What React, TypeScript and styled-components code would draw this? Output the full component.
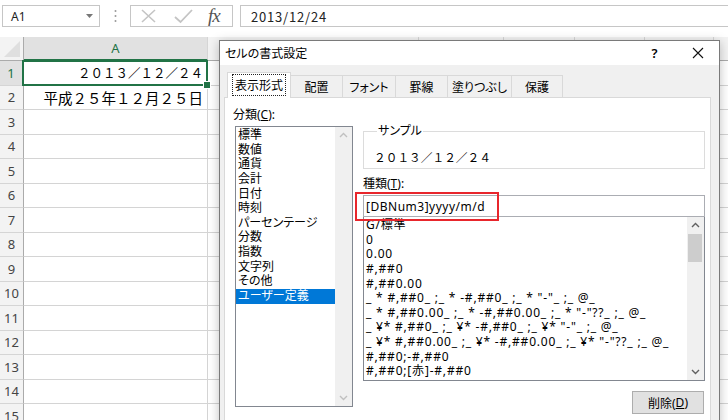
import { Fragment } from "react";
import styled, { createGlobalStyle } from "styled-components";

const JP = `"Noto Sans CJK JP", "Noto Sans", sans-serif`;
const UI = `"Noto Sans", "Noto Sans CJK JP", sans-serif`;

const GlobalStyle = createGlobalStyle`
  html, body { margin: 0; padding: 0; background: #fff; }
  body { font-family: ${JP}; }
  * { box-sizing: border-box; }
`;

const Page = styled.div`
  position: relative;
  width: 728px;
  height: 420px;
  overflow: hidden;
  background: #fff;
  font-family: ${JP};
  color: #000;
`;

/* ---------- formula bar ---------- */

const FormulaBar = styled.div`
  display: flex;
  align-items: center;
  height: 37px;
  padding: 5px 0 10px 2px;
`;

const NameBox = styled.div`
  display: flex;
  align-items: center;
  justify-content: space-between;
  width: 98px;
  height: 22px;
  padding: 0 6px 0 8px;
  border: 1px solid #c6c6c6;
  font: 12px "Noto Sans", sans-serif;
  color: #222;
`;

const Dots = styled.div`
  display: flex;
  justify-content: center;
  width: 30px;
`;

const FxBox = styled.div`
  display: flex;
  align-items: center;
  width: 103px;
  height: 22px;
  padding-left: 9px;
  gap: 17px;
  border: 1px solid #c6c6c6;
`;

const FxText = styled.span`
  font: italic 19px "Liberation Serif", serif;
  color: #555;
  letter-spacing: -1px;
  margin-left: -2px;
`;

const FormulaInput = styled.div`
  flex: 1;
  height: 22px;
  margin-left: 7px;
  padding-left: 10px;
  border: 1px solid #c6c6c6;
  border-right: none;
  display: flex;
  align-items: center;
  font: 13px ${JP};
  letter-spacing: 0.8px;
  color: #222;
`;

/* ---------- sheet ---------- */

const Sheet = styled.div`
  display: grid;
  grid-template-columns: 24px 184px 211px 85px 71px 70px 69px 40px;
  grid-template-rows: 24px;
  grid-auto-rows: 24.5px;
`;

const Corner = styled.div`
  position: relative;
  background: #f3f3f3;
  border-right: 1px solid #ababab;
  border-bottom: 1px solid #ababab;
  &::after {
    content: "";
    position: absolute;
    right: 3px;
    bottom: 3px;
    border-left: 16px solid transparent;
    border-bottom: 16px solid #dfdfdf;
  }
`;

const ColHead = styled.div<{ $active?: boolean }>`
  display: flex;
  align-items: center;
  justify-content: center;
  background: ${(p) => (p.$active ? "#e1e1e1" : "#f3f3f3")};
  border-right: 1px solid #d5d5d5;
  border-bottom: ${(p) => (p.$active ? "2px solid #217346" : "1px solid #ababab")};
  color: ${(p) => (p.$active ? "#217346" : "#444")};
  font: 13px "Noto Sans", sans-serif;
`;

const RowHead = styled.div<{ $active?: boolean }>`
  display: flex;
  align-items: center;
  justify-content: center;
  background: ${(p) => (p.$active ? "#e1e1e1" : "#f3f3f3")};
  border-right: ${(p) => (p.$active ? "2px solid #217346" : "1px solid #ababab")};
  border-bottom: 1px solid #d5d5d5;
  color: ${(p) => (p.$active ? "#217346" : "#444")};
  font: 13px "Noto Sans", sans-serif;
`;

const Cell = styled.div<{ $selected?: boolean; $size?: number }>`
  position: relative;
  display: flex;
  align-items: center;
  justify-content: flex-end;
  padding-right: 4px;
  border-right: 1px solid #d4d4d4;
  border-bottom: 1px solid #d4d4d4;
  font: ${(p) => p.$size ?? 13}px ${JP};
  white-space: nowrap;
  ${(p) =>
    p.$selected &&
    `
    &::after {
      content: "";
      position: absolute;
      inset: -1px -1px -1px -2px;
      border: 2px solid #217346;
    }
    &::before {
      content: "";
      position: absolute;
      right: -4px;
      bottom: -4px;
      width: 6px;
      height: 6px;
      background: #217346;
      border: 1px solid #fff;
      z-index: 1;
    }
  `}
`;

/* ---------- dialog ---------- */

const Dialog = styled.div`
  position: absolute;
  left: 219px;
  top: 40px;
  width: 501px;
  height: 400px;
  display: flex;
  flex-direction: column;
  background: #f0f0f0;
  border: 1px solid #7a7a7a;
  box-shadow: 0 2px 10px rgba(0, 0, 0, 0.25);
  font: 12px ${UI};
  font-feature-settings: "palt";
`;

const TitleBar = styled.div`
  display: flex;
  align-items: center;
  height: 24px;
  background: #fff;
  padding-left: 5px;
`;

const Title = styled.div`
  flex: 1;
`;

const TitleButton = styled.div`
  width: 43px;
  height: 24px;
  display: flex;
  align-items: center;
  justify-content: center;
  font: 600 13px "Noto Sans", sans-serif;
`;

const Body = styled.div`
  flex: 1;
  display: flex;
  flex-direction: column;
  padding: 5px 8px 0 4px;
`;

const TabRow = styled.div`
  display: flex;
  align-items: flex-end;
  height: 27px;
  padding-left: 3px;
`;

const Tab = styled.div<{ $w: number; $active?: boolean }>`
  width: ${(p) => p.$w}px;
  height: ${(p) => (p.$active ? 26 : 22)}px;
  margin-bottom: ${(p) => (p.$active ? -1 : 0)}px;
  display: flex;
  align-items: center;
  justify-content: center;
  background: ${(p) => (p.$active ? "#fff" : "#f0f0f0")};
  border: 1px solid #d9d9d9;
  border-bottom: none;
  border-left-width: ${(p) => (p.$active ? 1 : 0)}px;
  position: relative;
  z-index: ${(p) => (p.$active ? 1 : 0)};
  padding-bottom: ${(p) => (p.$active ? 2 : 0)}px;
  white-space: nowrap;
`;

const Focus = styled.span`
  outline: 1px dotted #222;
  outline-offset: 1px;
  padding: 0 1px;
`;

const Panel = styled.div`
  flex: 1;
  display: flex;
  gap: 10px;
  padding: 10px 5px 0 8px;
  background: #fff;
  border: 1px solid #d9d9d9;
`;

const LeftCol = styled.div`
  width: 120px;
  display: flex;
  flex-direction: column;
`;

const RightCol = styled.div`
  width: 342px;
  display: flex;
  flex-direction: column;
`;

const Label = styled.div<{ $mt?: number }>`
  line-height: 14px;
  margin-top: ${(p) => p.$mt ?? 0}px;
`;

const ListBox = styled.div<{ $h: number; $w?: number; $ml?: number; $mt?: number }>`
  display: flex;
  height: ${(p) => p.$h}px;
  width: ${(p) => (p.$w ? `${p.$w}px` : "auto")};
  margin-left: ${(p) => p.$ml ?? 0}px;
  margin-top: ${(p) => p.$mt ?? 0}px;
  border: 1px solid #828790;
  background: #fff;
  overflow: hidden;
`;

const Items = styled.div<{ $spacing?: number }>`
  flex: 1;
  padding-top: 1px;
  min-width: 0;
  letter-spacing: ${(p) => p.$spacing ?? 0}px;
`;

const Item = styled.div<{ $selected?: boolean }>`
  height: 14.65px;
  line-height: 14.65px;
  padding-left: 2px;
  white-space: nowrap;
  background: ${(p) => (p.$selected ? "#0078d7" : "transparent")};
  color: ${(p) => (p.$selected ? "#fff" : "#000")};
`;

const ScrollBar = styled.div<{ $disabled?: boolean }>`
  width: 17px;
  display: flex;
  flex-direction: column;
  align-items: center;
  justify-content: space-between;
  background: #f0f0f0;
  padding: 5px 0 5px;
  position: relative;
  color: ${(p) => (p.$disabled ? "#c0c0c0" : "#606060")};
`;

const Thumb = styled.div`
  position: absolute;
  left: 1px;
  right: 2px;
  top: 17px;
  height: 28px;
  background: #cdcdcd;
`;

const Group = styled.fieldset`
  margin: 16px 0 0;
  padding: 10px 8px 3px 10px;
  border: 1px solid #dcdcdc;
  legend {
    padding: 0 1px;
    margin-left: 3px;
    line-height: 14px;
  }
`;

const Sample = styled.div`
  line-height: 14px;
  font: 11.7px ${JP};
  font-feature-settings: normal;
`;

const InputWrap = styled.div`
  position: relative;
  margin-top: 4px;
`;

const TextInput = styled.div`
  height: 22px;
  border: 1px solid #abadb3;
  padding-left: 2px;
  display: flex;
  align-items: center;
  letter-spacing: 0.5px;
`;

const RedMark = styled.div`
  position: absolute;
  left: -8px;
  top: -3px;
  width: 144px;
  height: 29px;
  border: 2px solid #e8262c;
`;

const ButtonRow = styled.div`
  display: flex;
  justify-content: flex-end;
  margin-top: 10px;
  padding-right: 1px;
`;

const Button = styled.div`
  width: 72px;
  height: 23px;
  display: flex;
  align-items: center;
  justify-content: center;
  background: #e1e1e1;
  border: 1px solid #adadad;
`;

const Arrow = ({ up }: { up?: boolean }) => (
  <svg width="9" height="6" viewBox="0 0 9 6">
    <path
      d={up ? "M1 5 L4.5 1.5 L8 5" : "M1 1 L4.5 4.5 L8 1"}
      fill="none"
      stroke="currentColor"
      strokeWidth="1.4"
    />
  </svg>
);

const categories = [
  "標準",
  "数値",
  "通貨",
  "会計",
  "日付",
  "時刻",
  "パーセンテージ",
  "分数",
  "指数",
  "文字列",
  "その他",
  "ユーザー定義",
];

const formats = [
  "G/標準",
  "0",
  "0.00",
  "#,##0",
  "#,##0.00",
  '_ * #,##0_ ;_ * -#,##0_ ;_ * "-"_ ;_ @_',
  '_ * #,##0.00_ ;_ * -#,##0.00_ ;_ * "-"??_ ;_ @_',
  '_ ¥* #,##0_ ;_ ¥* -#,##0_ ;_ ¥* "-"_ ;_ @_',
  '_ ¥* #,##0.00_ ;_ ¥* -#,##0.00_ ;_ ¥* "-"??_ ;_ @_',
  "#,##0;-#,##0",
  "#,##0;[赤]-#,##0",
];

const tabs: [string, number][] = [
  ["表示形式", 64],
  ["配置", 52],
  ["フォント", 53],
  ["罫線", 52],
  ["塗りつぶし", 64],
  ["保護", 51],
];

const cols = ["A", "B", "C", "D", "E", "F", "G"];

export default function App() {
  const rows = Array.from({ length: 15 }, (_, i) => i + 1);
  return (
    <Page>
      <GlobalStyle />
      <FormulaBar>
        <NameBox>
          A1
          <svg width="7" height="4" viewBox="0 0 7 4">
            <path d="M0 0 H7 L3.5 4 Z" fill="#777" />
          </svg>
        </NameBox>
        <Dots>
          <svg width="3" height="14" viewBox="0 0 3 14">
            <circle cx="1.5" cy="2" r="1" fill="#9a9a9a" />
            <circle cx="1.5" cy="7" r="1" fill="#9a9a9a" />
            <circle cx="1.5" cy="12" r="1" fill="#9a9a9a" />
          </svg>
        </Dots>
        <FxBox>
          <svg width="17" height="16" viewBox="0 0 17 16">
            <path d="M2 2 L15 14 M15 2 L2 14" stroke="#c4c4c4" strokeWidth="1.6" />
          </svg>
          <svg width="19" height="16" viewBox="0 0 19 16">
            <path d="M1 9 L6.5 14 L18 2" fill="none" stroke="#c4c4c4" strokeWidth="1.8" />
          </svg>
          <FxText>fx</FxText>
        </FxBox>
        <FormulaInput>2013/12/24</FormulaInput>
      </FormulaBar>

      <Sheet>
        <Corner />
        {cols.map((c) => (
          <ColHead key={c} $active={c === "A"}>
            {c}
          </ColHead>
        ))}
        {rows.map((r) => (
          <Fragment key={r}>
            <RowHead $active={r === 1}>{r}</RowHead>
            {cols.map((c) => (
              <Cell
                key={c}
                $selected={r === 1 && c === "A"}
                $size={r === 1 ? 12.5 : 14.5}
              >
                {c === "A" && r === 1 && "２０１３／１２／２４"}
                {c === "A" && r === 2 && "平成２５年１２月２５日"}
              </Cell>
            ))}
          </Fragment>
        ))}
      </Sheet>

      <Dialog>
        <TitleBar>
          <Title>セルの書式設定</Title>
          <TitleButton>?</TitleButton>
          <TitleButton>
            <svg width="12" height="12" viewBox="0 0 12 12">
              <path d="M1 1 L11 11 M11 1 L1 11" stroke="#111" strokeWidth="1.1" />
            </svg>
          </TitleButton>
        </TitleBar>
        <Body>
          <TabRow>
            {tabs.map(([t, w], i) => (
              <Tab key={t} $w={w} $active={i === 0}>
                {i === 0 ? <Focus>{t}</Focus> : t}
              </Tab>
            ))}
          </TabRow>
          <Panel>
            <LeftCol>
              <Label>
                分類(<u>C</u>):
              </Label>
              <ListBox $h={281} $w={118} $ml={2} $mt={4}>
                <Items>
                  {categories.map((c, i) => (
                    <Item key={c} $selected={i === categories.length - 1}>
                      {c}
                    </Item>
                  ))}
                </Items>
                <ScrollBar $disabled>
                  <Arrow up />
                  <Arrow />
                </ScrollBar>
              </ListBox>
            </LeftCol>
            <RightCol>
              <Group>
                <legend>サンプル</legend>
                <Sample>２０１３／１２／２４</Sample>
              </Group>
              <Label $mt={8}>
                種類(<u>T</u>):
              </Label>
              <InputWrap>
                <TextInput>[DBNum3]yyyy/m/d</TextInput>
                <RedMark />
              </InputWrap>
              <ListBox $h={165} $mt={-1}>
                <Items $spacing={0.8}>
                  {formats.map((f) => (
                    <Item key={f}>{f}</Item>
                  ))}
                </Items>
                <ScrollBar>
                  <Arrow up />
                  <Thumb />
                  <Arrow />
                </ScrollBar>
              </ListBox>
              <ButtonRow>
                <Button>
                  削除(<u>D</u>)
                </Button>
              </ButtonRow>
            </RightCol>
          </Panel>
        </Body>
      </Dialog>
    </Page>
  );
}
